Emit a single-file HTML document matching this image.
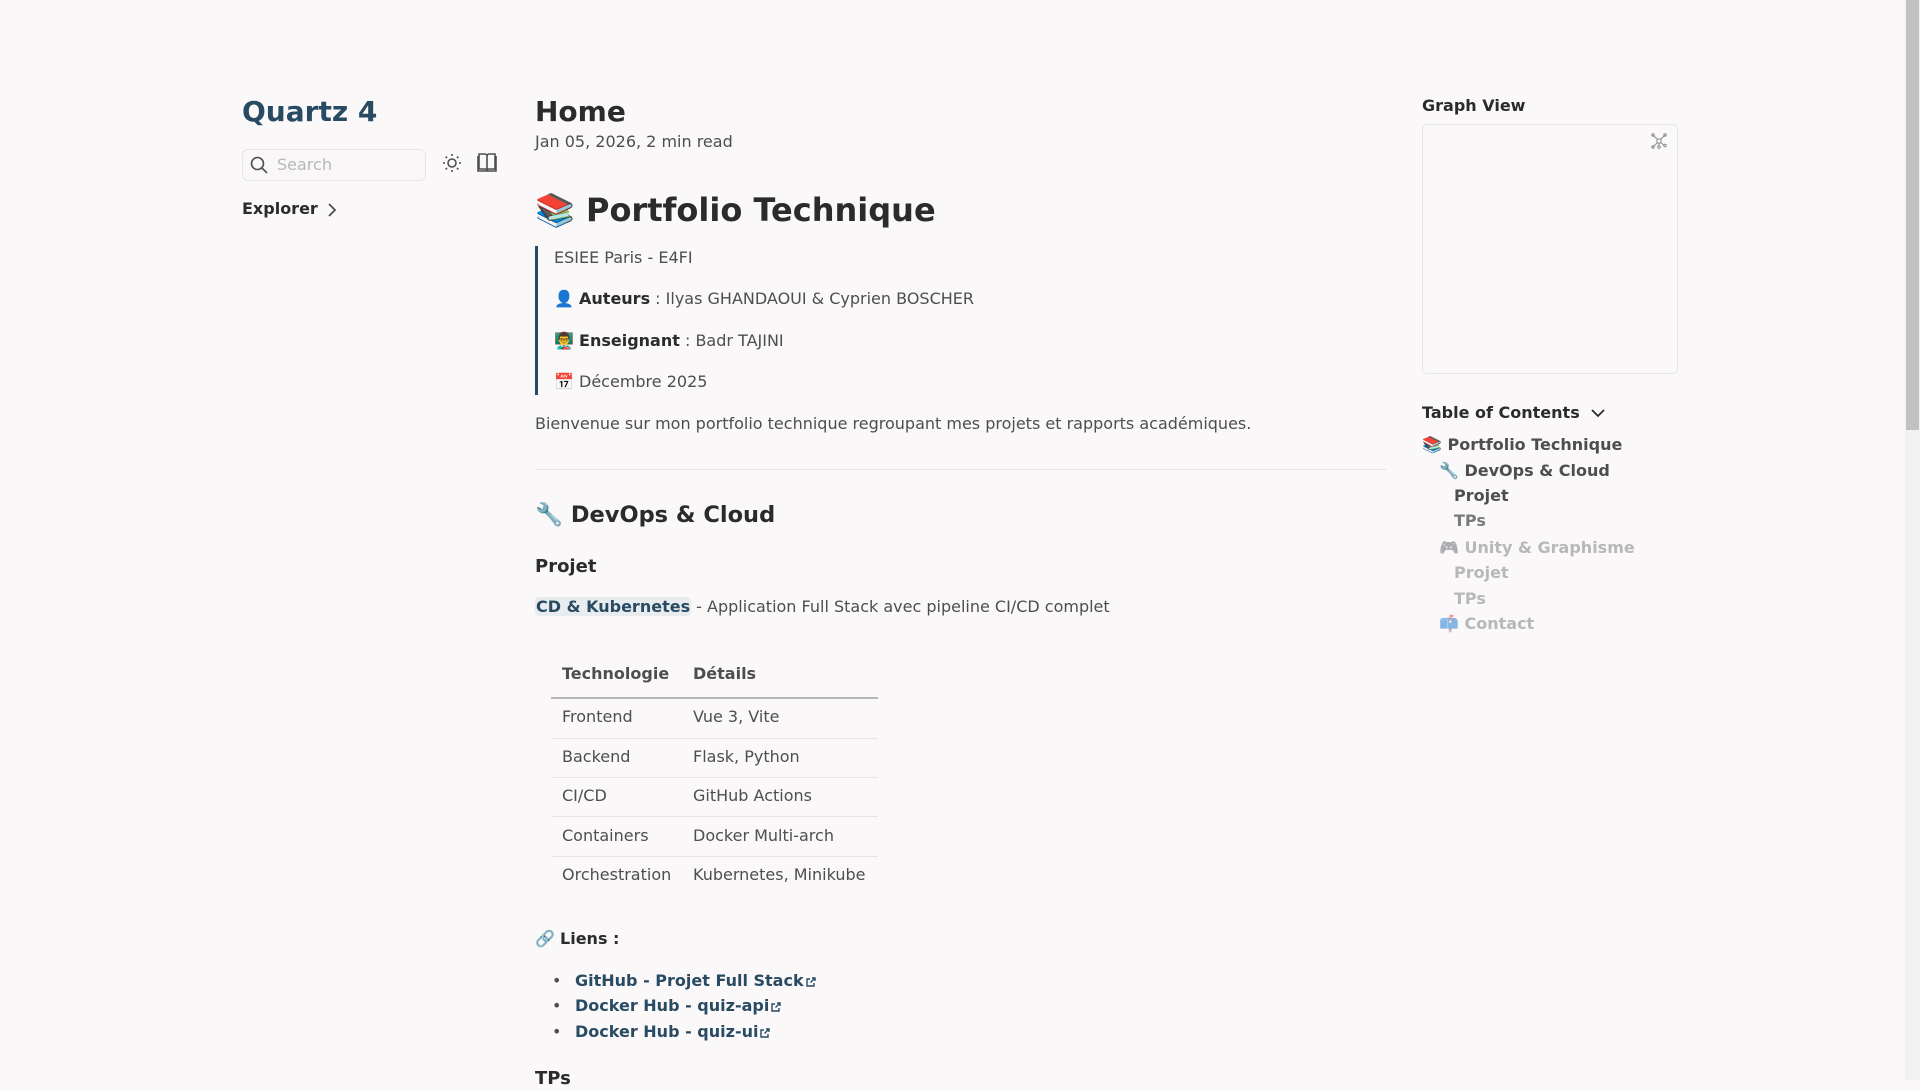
<!DOCTYPE html>
<html><head><meta charset="utf-8"><style>
*{margin:0;padding:0;box-sizing:border-box}
html,body{width:1920px;height:1080px;overflow:hidden;background:#faf8f8;font-family:"DejaVu Sans","Liberation Sans",sans-serif;color:#4e4e4e}
.a{position:absolute;white-space:nowrap}
.b{font-weight:bold}
.dk{color:#2b2b2b}
.ln{color:#284b63;font-weight:bold}
.f16{font-size:16px}
.ext{display:inline-block;width:10px;height:10px;margin-left:2px;vertical-align:middle}
#w{position:absolute;left:0;top:1px;width:1920px;height:1080px}
</style></head><body>
<div class="a" style="left:1905px;top:0;width:15px;height:1080px;background:#f1f1f1"></div>
<div class="a" style="left:1906px;top:0;width:13px;height:430px;background:#c1c1c1"></div>
<div id="w">
<div class="a b" style="left:242px;top:94px;font-size:28px;color:#284b63;line-height:34px">Quartz 4</div>
<div class="a" style="left:242px;top:148px;width:184px;height:32px;border:1px solid #e5e5e5;border-radius:6px;background:#f9f7f7"></div>
<svg class="a" style="left:249px;top:154px" width="20" height="20" viewBox="0 0 20 20"><circle cx="8.5" cy="8.5" r="6" fill="none" stroke="#4e4e4e" stroke-width="1.6"/><path d="M13 13l5 5" stroke="#4e4e4e" stroke-width="1.6"/></svg>
<div class="a f16" style="left:277px;top:154px;color:#b8b8b8;line-height:20px">Search</div>
<svg class="a" style="left:442px;top:152px" width="20" height="20" viewBox="0 0 20 20" fill="none" stroke="#4e4e4e" stroke-width="1.6"><circle cx="10" cy="10" r="4"/><path d="M10 1v2M10 17v2M1 10h2M17 10h2M3.6 3.6l1.4 1.4M15 15l1.4 1.4M3.6 16.4L5 15M15 5l1.4-1.4"/></svg>
<svg class="a" style="left:477px;top:151px" width="20" height="21" viewBox="0 0 20 21" fill="none" stroke="#4e4e4e" stroke-width="1.6"><path d="M2 2h6a2 2 0 0 1 2 2v15a2 2 0 0 0-2-2H2zM18 2h-6a2 2 0 0 0-2 2v15a2 2 0 0 1 2-2h6z"/><path d="M1 4v15h18V4"/></svg>
<div class="a b dk f16" style="left:242px;top:198px;line-height:20px">Explorer</div>
<svg class="a" style="left:326px;top:201px" width="12" height="16" viewBox="0 0 12 16" fill="none" stroke="#4e4e4e" stroke-width="1.8"><path d="M3 2l6 6-6 6"/></svg>

<div class="a b dk" style="left:535px;top:94px;font-size:28px;line-height:34px">Home</div>
<div class="a f16" style="left:535px;top:131px;line-height:20px">Jan 05, 2026,&nbsp;2 min read</div>
<div class="a b dk" style="left:535px;top:189px;font-size:32px;line-height:40px">📚 Portfolio Technique</div>
<div class="a" style="left:535px;top:245px;width:3px;height:149px;background:#284b63"></div>
<div class="a f16" style="left:554px;top:247px;line-height:20px">ESIEE Paris - E4FI</div>
<div class="a f16" style="left:554px;top:288px;line-height:20px">👤 <b class="dk">Auteurs</b> : Ilyas GHANDAOUI &amp; Cyprien BOSCHER</div>
<div class="a f16" style="left:554px;top:330px;line-height:20px">👨‍🏫 <b class="dk">Enseignant</b> : Badr TAJINI</div>
<div class="a f16" style="left:554px;top:371px;line-height:20px">📅 Décembre 2025</div>
<div class="a f16" style="left:535px;top:413px;line-height:20px">Bienvenue sur mon portfolio technique regroupant mes projets et rapports académiques.</div>
<div class="a" style="left:535px;top:468px;width:851px;height:1px;background:#e5e5e5"></div>
<div class="a b dk" style="left:535px;top:500px;font-size:22.5px;line-height:28px">🔧 DevOps &amp; Cloud</div>
<div class="a b dk" style="left:535px;top:555px;font-size:18px;line-height:22px">Projet</div>
<div class="a f16" style="left:535px;top:596px;line-height:20px"><span class="ln" style="background:#e9ecef;border-radius:4px;padding:0 1px">CD &amp; Kubernetes</span> - Application Full Stack avec pipeline CI/CD complet</div>
<div class="a b f16" style="left:562px;top:663px;line-height:20px">Technologie</div>
<div class="a b f16" style="left:693px;top:663px;line-height:20px">Détails</div>
<div class="a" style="left:551px;top:696px;width:327px;height:2px;background:#b8b8b8"></div>
<div class="a" style="left:551px;top:737px;width:327px;height:1px;background:#e5e5e5"></div>
<div class="a" style="left:551px;top:776px;width:327px;height:1px;background:#e5e5e5"></div>
<div class="a" style="left:551px;top:815px;width:327px;height:1px;background:#e5e5e5"></div>
<div class="a" style="left:551px;top:855px;width:327px;height:1px;background:#e5e5e5"></div>
<div class="a f16" style="left:562px;top:706px;line-height:20px">Frontend</div><div class="a f16" style="left:693px;top:706px;line-height:20px">Vue 3, Vite</div>
<div class="a f16" style="left:562px;top:746px;line-height:20px">Backend</div><div class="a f16" style="left:693px;top:746px;line-height:20px">Flask, Python</div>
<div class="a f16" style="left:562px;top:785px;line-height:20px">CI/CD</div><div class="a f16" style="left:693px;top:785px;line-height:20px">GitHub Actions</div>
<div class="a f16" style="left:562px;top:825px;line-height:20px">Containers</div><div class="a f16" style="left:693px;top:825px;line-height:20px">Docker Multi-arch</div>
<div class="a f16" style="left:562px;top:864px;line-height:20px">Orchestration</div><div class="a f16" style="left:693px;top:864px;line-height:20px">Kubernetes, Minikube</div>
<div class="a f16" style="left:535px;top:928px;line-height:20px">🔗 <b class="dk">Liens :</b></div>
<div class="a f16" style="left:552px;top:970px;line-height:20px">•</div>
<div class="a f16" style="left:552px;top:995px;line-height:20px">•</div>
<div class="a f16" style="left:552px;top:1021px;line-height:20px">•</div>
<div class="a f16 ln" style="left:575px;top:970px;line-height:20px">GitHub - Projet Full Stack<svg class="ext" viewBox="0 0 10 10" fill="none" stroke="#284b63" stroke-width="1.4"><path d="M4 2H1v7h7V6M6 1h3v3M9 1L4.5 5.5"/></svg></div>
<div class="a f16 ln" style="left:575px;top:995px;line-height:20px">Docker Hub - quiz-api<svg class="ext" viewBox="0 0 10 10" fill="none" stroke="#284b63" stroke-width="1.4"><path d="M4 2H1v7h7V6M6 1h3v3M9 1L4.5 5.5"/></svg></div>
<div class="a f16 ln" style="left:575px;top:1021px;line-height:20px">Docker Hub - quiz-ui<svg class="ext" viewBox="0 0 10 10" fill="none" stroke="#284b63" stroke-width="1.4"><path d="M4 2H1v7h7V6M6 1h3v3M9 1L4.5 5.5"/></svg></div>
<div class="a b dk" style="left:535px;top:1067px;font-size:18px;line-height:22px">TPs</div>

<div class="a b dk f16" style="left:1422px;top:95px;line-height:20px">Graph View</div>
<div class="a" style="left:1422px;top:123px;width:256px;height:250px;border:1px solid #e5e5e5;border-radius:5px"></div>
<svg class="a" style="left:1650px;top:131px" width="18" height="18" viewBox="0 0 18 18" fill="none" stroke="#8a8a8a" stroke-width="1"><rect x="7" y="7" width="4" height="4"/><path d="M7 7L3 3M11 7l4-4M7 11l-4 4M11 11l3 2M9 11v3"/><circle cx="3" cy="3" r="1.2"/><circle cx="15" cy="3" r="1.2"/><circle cx="3" cy="15" r="1.2"/><circle cx="15" cy="13.5" r="1.2"/><circle cx="9" cy="15" r="1.2"/></svg>
<div class="a b dk f16" style="left:1422px;top:402px;line-height:20px">Table of Contents</div>
<svg class="a" style="left:1590px;top:405px" width="16" height="14" viewBox="0 0 16 14" fill="none" stroke="#2b2b2b" stroke-width="1.8"><path d="M2 4l6 6 6-6"/></svg>
<div class="a b f16" style="left:1422px;top:434px;line-height:20px">📚 Portfolio Technique</div>
<div class="a b f16" style="left:1439px;top:460px;line-height:20px">🔧 DevOps &amp; Cloud</div>
<div class="a b f16" style="left:1454px;top:485px;line-height:20px">Projet</div>
<div class="a b f16" style="left:1454px;top:510px;line-height:20px;color:#7a7a7a">TPs</div>
<div class="a b f16" style="left:1439px;top:537px;line-height:20px;color:#b8b8b8"><span style="opacity:.5">🎮</span> Unity &amp; Graphisme</div>
<div class="a b f16" style="left:1454px;top:562px;line-height:20px;color:#b8b8b8">Projet</div>
<div class="a b f16" style="left:1454px;top:588px;line-height:20px;color:#b8b8b8">TPs</div>
<div class="a b f16" style="left:1439px;top:613px;line-height:20px;color:#b8b8b8"><span style="opacity:.5">📫</span> Contact</div>
</div>
</body></html>
